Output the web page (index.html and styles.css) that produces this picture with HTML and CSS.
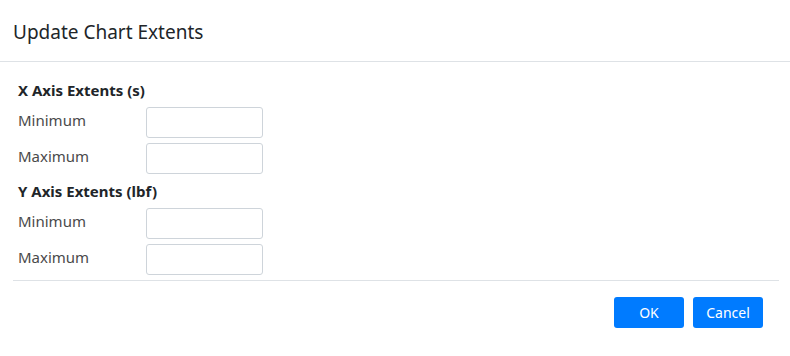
FILE: index.html
```html
<!DOCTYPE html>
<html lang="en">
<head>
<meta charset="utf-8">
<title>Update Chart Extents</title>
<link rel="stylesheet" href="styles.css">
</head>
<body>
<div class="modal">
  <div class="modal-header">
    <h5 class="modal-title">Update Chart Extents</h5>
  </div>
  <div class="modal-body">
    <div class="section-title">X Axis Extents (s)</div>
    <div class="field-row">
      <label class="field-label">Minimum</label>
      <input class="field-input" type="text">
    </div>
    <div class="field-row">
      <label class="field-label">Maximum</label>
      <input class="field-input" type="text">
    </div>
    <div class="section-title">Y Axis Extents (lbf)</div>
    <div class="field-row">
      <label class="field-label">Minimum</label>
      <input class="field-input" type="text">
    </div>
    <div class="field-row">
      <label class="field-label">Maximum</label>
      <input class="field-input" type="text">
    </div>
  </div>
  <div class="modal-footer">
    <button class="btn btn-primary" type="button">OK</button>
    <button class="btn btn-primary" type="button">Cancel</button>
  </div>
</div>
</body>
</html>
```

FILE: styles.css
```css
* { box-sizing: border-box; }
html, body {
  margin: 0;
  padding: 0;
  background: #ffffff;
}
body {
  font-family: "Noto Sans", "Open Sans", "Liberation Sans", sans-serif;
  color: #212529;
  width: 790px;
  height: 356px;
}
.modal {
  display: flex;
  flex-direction: column;
}
.modal-header {
  height: 62px;
  display: flex;
  align-items: center;
  padding: 2px 0 0 13px;
  border-bottom: 1px solid #dee2e6;
}
.modal-title {
  margin: 0;
  font-size: 19px;
  font-weight: 400;
  line-height: 24px;
  color: #212529;
}
.modal-body {
  padding: 16px 0 5px 18px;
  display: flex;
  flex-direction: column;
  gap: 5px;
}
.section-title {
  font-size: 15px;
  font-weight: 700;
  line-height: 24px;
  color: #212529;
}
.field-row {
  display: flex;
  align-items: center;
  height: 31px;
}
.field-label {
  width: 128px;
  font-size: 15px;
  line-height: 20px;
  padding-bottom: 5px;
  color: #4a4a4a;
}
.field-input {
  width: 117px;
  height: 31px;
  border: 1px solid #ced4da;
  border-radius: 3px;
  padding: 0 8px;
  font-family: inherit;
  font-size: 14px;
  background: #fff;
}
.modal-footer {
  margin: 0 11px 0 13px;
  border-top: 1px solid #dee2e6;
  padding: 16px 16px 0 0;
  display: flex;
  justify-content: flex-end;
  gap: 9px;
}
.btn {
  width: 70px;
  height: 31px;
  border: none;
  border-radius: 3px;
  font-family: inherit;
  font-size: 14px;
  padding: 0;
  cursor: pointer;
}
.btn-primary {
  background: #007bff;
  color: #ffffff;
}
```
